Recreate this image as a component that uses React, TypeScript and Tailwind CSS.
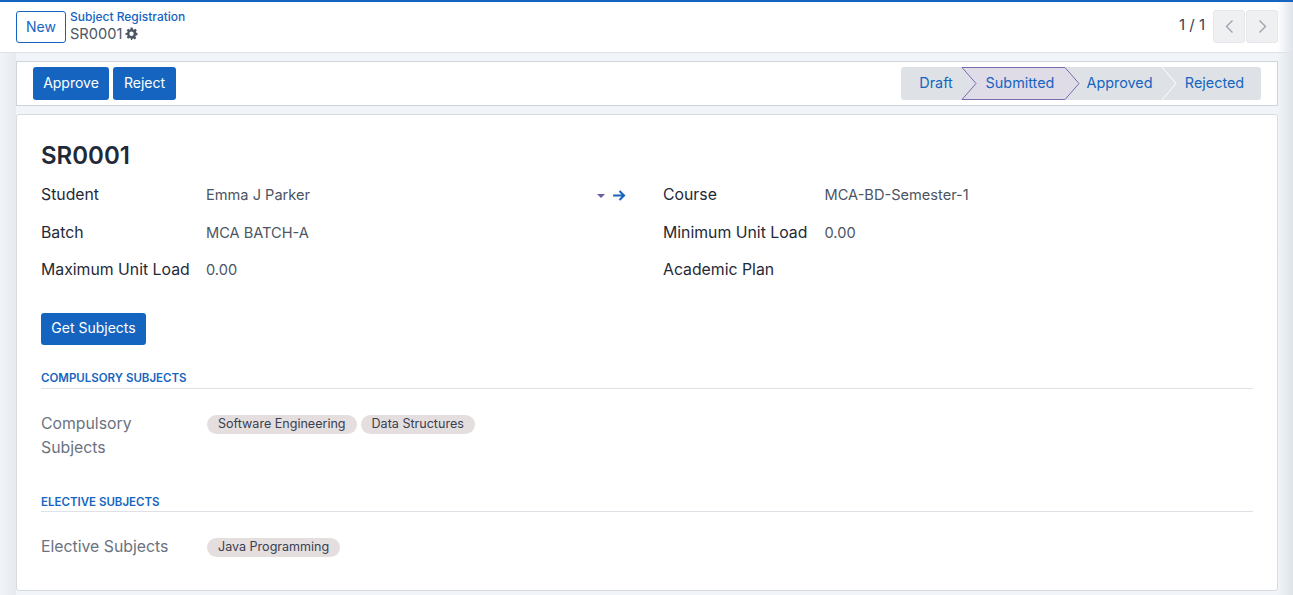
import React from "react";

const font = "font-['Inter','Liberation_Sans',sans-serif]";

function Gear() {
  return (
    <svg viewBox="0 0 24 24" className="w-[13px] h-[13px] ml-[3px]" fill="#4b5563">
      <path fillRule="evenodd" d="M10 1h4l.6 3.1 1.9.8 2.6-1.8 2.8 2.8-1.8 2.6.8 1.9L23 11v4l-3.1.6-.8 1.9 1.8 2.6-2.8 2.8-2.6-1.8-1.9.8L13 23.9h-2l-.6-3.1-1.9-.8-2.6 1.8-2.8-2.8 1.8-2.6-.8-1.9L1 15v-4l3.1-.6.8-1.9-1.8-2.6 2.8-2.8 2.6 1.8 1.9-.8L10 1zm2 7.5a4 4 0 1 0 0 8 4 4 0 0 0 0-8z" />
    </svg>
  );
}

function Tag({ children }: { children: React.ReactNode }) {
  return (
    <span className="inline-flex items-center h-[19px] px-[11px] rounded-full bg-[#e5dede] text-[12.55px] text-[#374151] whitespace-nowrap">
      {children}
    </span>
  );
}

function Field({ label, value, w = "w-[165px]", children }: { label: string; value?: string; w?: string; children?: React.ReactNode }) {
  return (
    <div className="flex items-center h-[24px]">
      <div className={`${w} shrink-0 pt-[2px] leading-[20px] text-[15.8px] text-[#1f2937] whitespace-nowrap`}>{label}</div>
      <div className="flex-1 flex items-center pt-[2px] leading-[20px] text-[14.6px] text-[#4b5563]">{value}{children}</div>
    </div>
  );
}

function Section({ title, cls }: { title: string; cls: string }) {
  return (
    <div className={`border-b border-[#dee2e6] h-[21px] text-[11.5px] font-semibold text-[#1565c0] uppercase ${cls}`}>{title}</div>
  );
}

function Stage({ children, cls }: { children: React.ReactNode; cls: string }) {
  return <div className={`relative z-10 flex items-center justify-center h-full pb-[2px] text-[14.4px] text-[#1565c0] ${cls}`}>{children}</div>;
}

export default function App() {
  return (
    <div className={`${font} relative w-[1293px] h-[595px] overflow-hidden bg-[#f1f5f9] flex flex-col`}>
      <header className="h-[53px] shrink-0 bg-white border-t-2 border-t-[#1565c0] border-b border-b-[#dee2e6] flex items-center pl-4 pr-[15px]">
        <button className="w-[50px] h-[32px] pb-[2px] rounded-[3px] border border-[#1565c0] text-[#1565c0] text-[14px]">New</button>
        <div className="ml-1 flex flex-col mt-[-3px]">
          <div className="text-[12px] font-medium text-[#1565c0] leading-[16px]">Subject Registration</div>
          <div className="flex items-center text-[14.6px] text-[#4b5563] leading-[18px]">SR0001<Gear /></div>
        </div>
        <div className="ml-auto flex items-center mt-[-2px]">
          <span className="text-[15px] text-[#374151] mr-[8px] pb-[1px]">1 / 1</span>
          <button className="w-[32px] h-[33px] rounded-[3px] bg-[#eff0f1] border border-[#e5e7eb] flex items-center justify-center text-[#9ca3af]">
            <svg viewBox="0 0 12 20" className="w-[9px] h-[15px]" fill="none" stroke="currentColor" strokeWidth="1.8"><path d="M10 2 2 10l8 8" /></svg>
          </button>
          <button className="ml-[1px] w-[32px] h-[33px] rounded-[3px] bg-[#eff0f1] border border-[#e5e7eb] flex items-center justify-center text-[#9ca3af]">
            <svg viewBox="0 0 12 20" className="w-[9px] h-[15px]" fill="none" stroke="currentColor" strokeWidth="1.8"><path d="m2 2 8 8-8 8" /></svg>
          </button>
        </div>
      </header>

      <main className="flex-1 pl-4 pr-[15px] pt-[8px] flex flex-col gap-[8px]">
        <div className="h-[45px] shrink-0 bg-white border border-[#ced4da] flex items-center justify-between pl-4 pr-4">
          <div className="flex gap-1">
            <button className="h-[33px] w-[76px] pb-[2px] rounded-[3px] bg-[#1565c0] text-white text-[14px]">Approve</button>
            <button className="h-[33px] w-[63px] pb-[2px] rounded-[3px] bg-[#1565c0] text-white text-[14px]">Reject</button>
          </div>
          <div className="relative h-[33px] w-[360px] bg-[#dee2e6] rounded-[3px] flex">
            <svg viewBox="0 0 360 33" className="absolute inset-0 w-full h-full pointer-events-none">
              <path d="M61 .5h103l14 16-14 16H61l14-16z" fill="#dfdbe7" stroke="#7c6bac" />
              <path d="M261 0l14 16.5L261 33" fill="none" stroke="#fff" />
            </svg>
            <Stage cls="w-[70px]">Draft</Stage>
            <Stage cls="w-[98px]">Submitted</Stage>
            <Stage cls="w-[101px]">Approved</Stage>
            <Stage cls="w-[89px]">Rejected</Stage>
          </div>
        </div>

        <section className="h-[477px] shrink-0 bg-white border border-[#d8dadd] rounded-[3px] px-6 pt-[25px]">
          <h1 className="text-[24px] font-semibold text-[#1f2937] leading-[32px]">SR0001</h1>
          <div className="grid grid-cols-[585.5px_1fr] gap-x-[36.5px] mt-[10px]">
            <div className="flex flex-col gap-[13.5px]">
              <Field label="Student" value="Emma J Parker">
                <span className="ml-auto flex items-center gap-[8px] pr-[1px]">
                  <svg viewBox="0 0 8 5" className="w-[8px] h-[5px] mt-[3px]"><path d="M0 0h8L4 4z" fill="#6f5a9e" /></svg>
                  <svg viewBox="0 0 14 12" className="w-[13px] h-[11px]" fill="none" stroke="#1565c0" strokeWidth="2.2"><path d="M0 6h12M7 1l5 5-5 5" /></svg>
                </span>
              </Field>
              <Field label="Batch" value="MCA BATCH-A" />
              <Field label="Maximum Unit Load" value="0.00" />
            </div>
            <div className="flex flex-col gap-[13.5px]">
              <Field w="w-[161.5px]" label="Course" value="MCA-BD-Semester-1" />
              <Field w="w-[161.5px]" label="Minimum Unit Load" value="0.00" />
              <Field w="w-[161.5px]" label="Academic Plan" />
            </div>
          </div>
          <button className="block mt-[32px] h-[32px] w-[105px] pb-[3px] rounded-[3px] bg-[#1565c0] text-white text-[14px]">Get Subjects</button>
          <div className="mt-[23px]"><Section title="Compulsory Subjects" cls="leading-[20px]" /></div>
          <div className="flex mt-[23px]">
            <div className="w-[166px] shrink-0 text-[15.8px] leading-[24px] text-[#6b7280]">Compulsory<br />Subjects</div>
            <div className="flex gap-1 mt-[3px] h-[19px]"><Tag>Software Engineering</Tag><Tag>Data Structures</Tag></div>
          </div>
          <div className="mt-[31px]"><Section title="Elective Subjects" cls="leading-[22px]" /></div>
          <div className="flex mt-[23px] items-center h-[24px]">
            <div className="w-[166px] shrink-0 text-[15.8px] text-[#6b7280]">Elective Subjects</div>
            <Tag>Java Programming</Tag>
          </div>
        </section>
      </main>

      <div className="absolute top-[2px] bottom-0 right-0 w-[16px] bg-gradient-to-r from-transparent to-[#dfe4ea] pointer-events-none" />
      <div className="absolute top-[53px] bottom-0 left-0 w-[16px] bg-gradient-to-r from-transparent to-[#e6eaef] pointer-events-none" />
    </div>
  );
}
